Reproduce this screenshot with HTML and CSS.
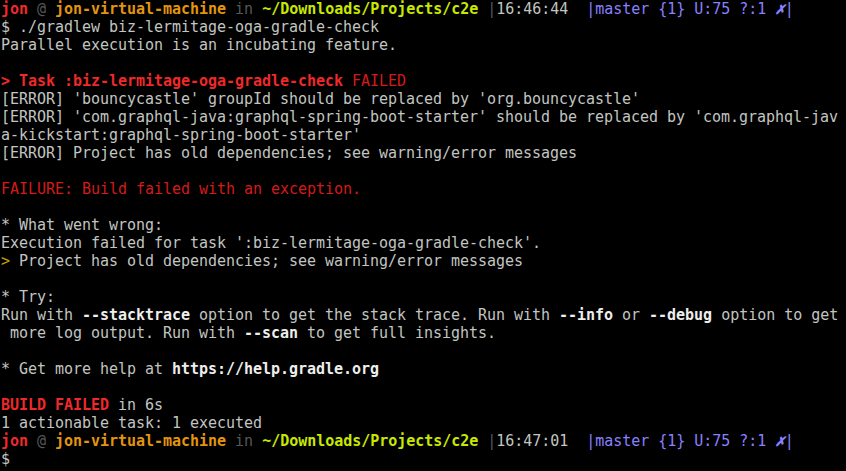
FILE: index.html
```html
<!DOCTYPE html>
<html>
<head>
    <meta charset="UTF-8">
    <title>Terminal - gradle check</title>
    <link rel="stylesheet" href="styles.css">
</head>
<body>
    <div class="terminal">
        <div class="line"><span class="user">jon</span> <span class="dim">@</span> <span class="host">jon-virtual-machine</span> <span class="dim">in</span> <span class="path">~/Downloads/Projects/c2e</span> <span class="dim">|</span>16:46:44  <span class="git">|master {1} U:75 ?:1 <b class="mark">✗</b>|</span></div>
        <div class="line">$ ./gradlew biz-lermitage-oga-gradle-check</div>
        <div class="line">Parallel execution is an incubating feature.</div>
        <div class="line"> </div>
        <div class="line"><b class="err">&gt; Task :biz-lermitage-oga-gradle-check</b> <span class="fail">FAILED</span></div>
        <div class="line">[ERROR] 'bouncycastle' groupId should be replaced by 'org.bouncycastle'</div>
        <div class="line">[ERROR] 'com.graphql-java:graphql-spring-boot-starter' should be replaced by 'com.graphql-jav</div>
        <div class="line">a-kickstart:graphql-spring-boot-starter'</div>
        <div class="line">[ERROR] Project has old dependencies; see warning/error messages</div>
        <div class="line"> </div>
        <div class="line"><span class="fail">FAILURE: Build failed with an exception.</span></div>
        <div class="line"> </div>
        <div class="line">* What went wrong:</div>
        <div class="line">Execution failed for task ':biz-lermitage-oga-gradle-check'.</div>
        <div class="line"><span class="warn">&gt;</span> Project has old dependencies; see warning/error messages</div>
        <div class="line"> </div>
        <div class="line">* Try:</div>
        <div class="line">Run with <b>--stacktrace</b> option to get the stack trace. Run with <b>--info</b> or <b>--debug</b> option to get</div>
        <div class="line"> more log output. Run with <b>--scan</b> to get full insights.</div>
        <div class="line"> </div>
        <div class="line">* Get more help at <b>https://help.gradle.org</b></div>
        <div class="line"> </div>
        <div class="line"><b class="err">BUILD FAILED</b> in 6s</div>
        <div class="line">1 actionable task: 1 executed</div>
        <div class="line"><span class="user">jon</span> <span class="dim">@</span> <span class="host">jon-virtual-machine</span> <span class="dim">in</span> <span class="path">~/Downloads/Projects/c2e</span> <span class="dim">|</span>16:47:01  <span class="git">|master {1} U:75 ?:1 <b class="mark">✗</b>|</span></div>
        <div class="line">$</div>
    </div>
</body>
</html>
```

FILE: styles.css
```css
html, body {
    margin: 0;
    padding: 0;
    background: #000000;
}
.terminal {
    font-family: "DejaVu Sans Mono", "Liberation Mono", monospace;
    font-size: 15px;
    letter-spacing: -0.03px;
    line-height: 18px;
    color: #c2c5c0;
    padding: 0 0 0 1px;
}
.line {
    white-space: pre;
    height: 18px;
}
b {
    font-weight: bold;
    color: #eeeeec;
}
.user {
    color: #ef2929;
    font-weight: bold;
}
.dim {
    color: #55575a;
}
.host {
    color: #e2950e;
    font-weight: bold;
}
.path {
    color: #c8e800;
    font-weight: bold;
}
.git {
    color: #8a80ff;
}
.git .mark {
    color: #8a80ff;
    font-style: italic;
    font-size: 16px;
}
.err {
    color: #ef2929;
}
.fail {
    color: #d41a1a;
}
.warn {
    color: #c4a000;
}
```
